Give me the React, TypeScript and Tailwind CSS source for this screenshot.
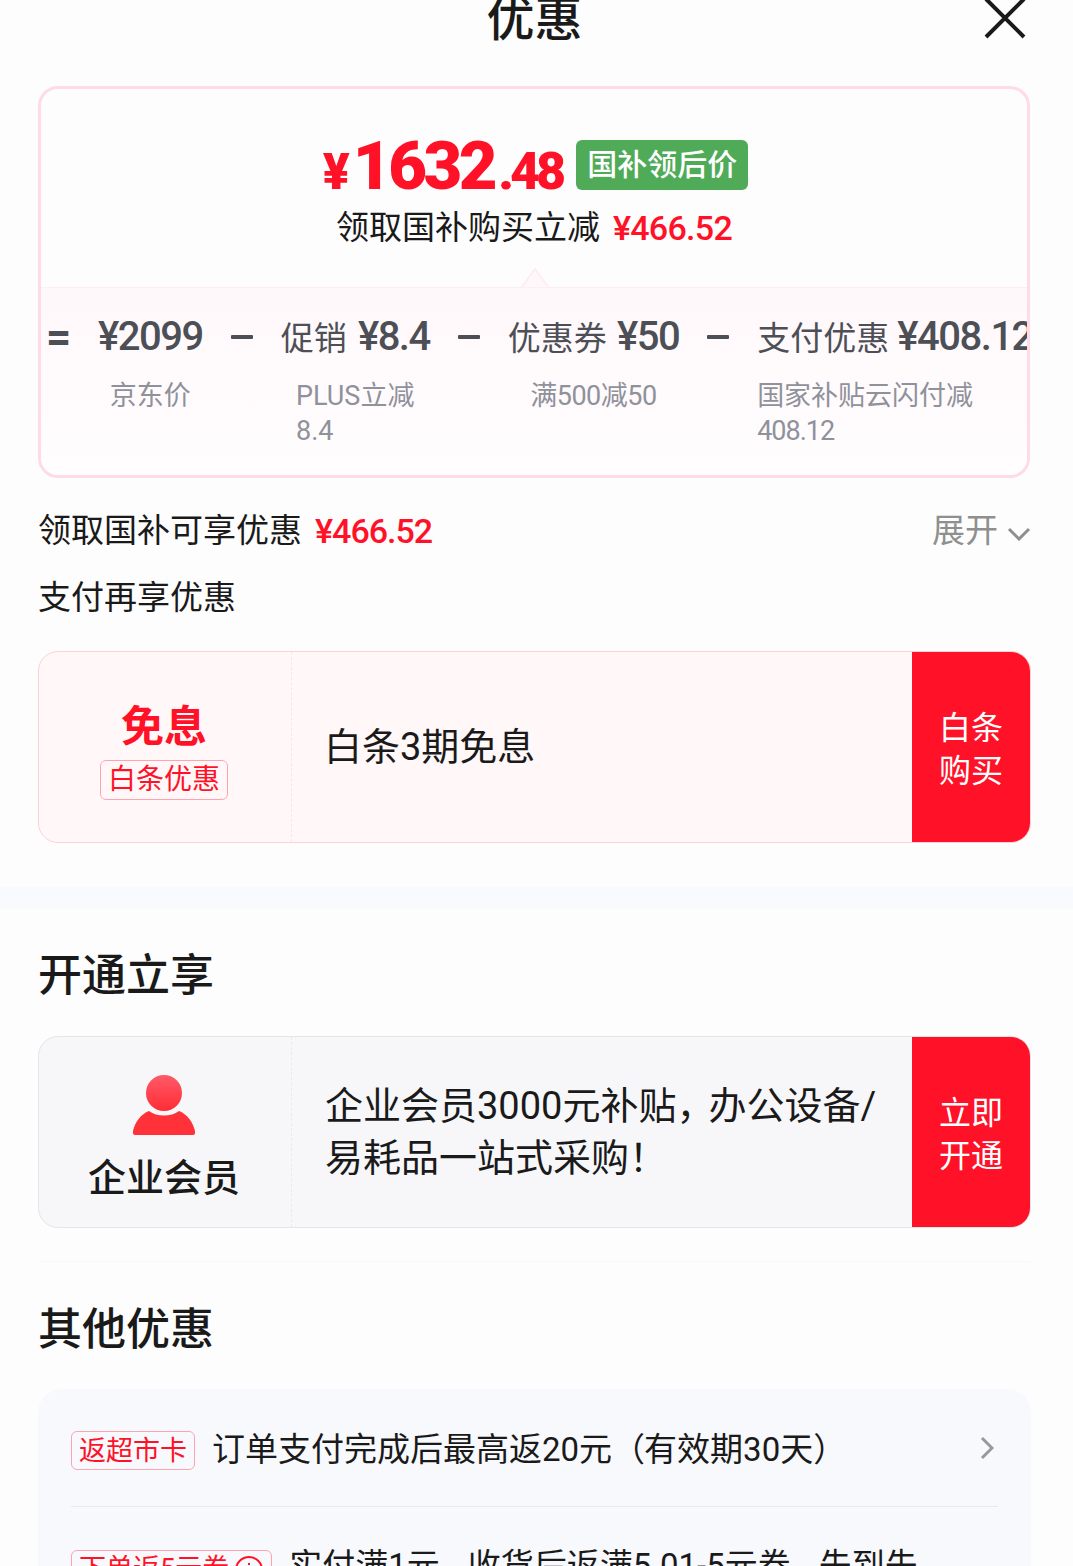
import React from "react";

const cjk = "font-['Roboto','Noto_Sans_CJK_SC',sans-serif]";

// numbers in the breakdown row are taller and narrower than the labels
const Amount = ({ children }: { children: string }) => (
  <span className="text-[40px] font-medium tracking-[-1.5px]">{children}</span>
);

const Part = ({ main, sub, center }: { main: React.ReactNode; sub: React.ReactNode; center?: boolean }) => (
  <div className={center ? "flex flex-col items-center shrink-0" : "flex flex-col shrink-0"}>
    <div className="text-[33px] leading-[44px] text-[#4d4f57] whitespace-nowrap">{main}</div>
    <div className="mt-[18px] text-[27px] leading-[35px] text-[#8f919b] whitespace-nowrap">{sub}</div>
  </div>
);

const Minus = () => (
  <div className="shrink-0 w-[22px] h-[4px] mt-[20px] rounded-[1px] bg-[#4d4f57]" />
);

const Action = ({ top, bottom }: { top: string; bottom: string }) => (
  <div className="w-[118px] shrink-0 bg-[#ff1228] flex flex-col items-center justify-center pt-[6px] text-[32px] leading-[43px] text-white">
    <div>{top}</div>
    <div>{bottom}</div>
  </div>
);

const Comma = ({ w }: { w: string }) => <span className={w}>，</span>;

export default function App() {
  return (
    <div className={`${cjk} w-[1073px] h-[1566px] overflow-hidden bg-[#fdfdfd] text-[#1a1a1a]`}>
      {/* header */}
      <div className="h-[100px] -mt-[14px] pr-[4px] grid grid-cols-[1fr_auto_1fr]">
        <div />
        <div className="text-[48px] leading-[68px] font-medium">优惠</div>
        <div className="flex justify-end pr-[42px] pt-[10px]">
          <svg width="44" height="44" viewBox="0 0 44 44" fill="none" stroke="#1a1a1a" strokeWidth="4">
            <path d="M3 3l38 38M41 3L3 41" />
          </svg>
        </div>
      </div>

      <div className="ml-[38px] w-[992px] h-[392px] border-[3px] border-[#ffdbe6] rounded-[20px] overflow-hidden flex flex-col">
        <div className="relative h-[199px] shrink-0 flex flex-col items-center border-b border-[#fdeef2]">
          <div className="mt-[51px] flex items-start h-[53px] ml-[3px]">
            <div className="mt-[1px] text-[#ff1228] font-black flex items-baseline leading-[50px]">
              <span className="text-[50px]">¥</span>
              <span className="text-[67px] ml-[3px] tracking-[-3.5px]">1632</span>
              <span className="text-[52px] ml-[4px] tracking-[-4px]">.48</span>
            </div>
            <div className="ml-[14px] h-[50px] w-[172px] bg-[#4fab58] rounded-[6px] text-white font-medium text-[30px] leading-[50px] text-center">
              国补领后价
            </div>
          </div>
          <div className="mt-[13px] flex items-center text-[33px] leading-[44px]">
            <span>领取国补购买立减</span>
            <span className="ml-[13px] text-[#ff1228] font-medium text-[34px] tracking-[-0.7px]">¥466.52</span>
          </div>
          <svg width="30" height="20" viewBox="0 0 30 20" className="absolute bottom-[-1px] left-[479px]">
            <path d="M1 20L15 1l14 19z" fill="#fff8fa" stroke="#fdeef2" strokeWidth="2" />
          </svg>
        </div>

        <div className="flex-1 bg-gradient-to-b from-[#fff8fa] to-[#fffdfe] pl-[5px] pt-[27px] flex gap-[28px]">
          <div className="shrink-0 text-[44px] leading-[44px] font-bold text-[#4d4f57] w-[24px]">=</div>
          <Part main={<Amount>¥2099</Amount>} sub="京东价" center />
          <Minus />
          <Part main={<>促销 <span className="ml-[3px]"><Amount>¥8.4</Amount></span></>} center sub={<>PLUS立减<br />8.4</>} />
          <Minus />
          <Part main={<>优惠券 <span className="ml-[2px]"><Amount>¥50</Amount></span></>} sub={<span className="tracking-[-0.5px]">满500减50</span>} center />
          <Minus />
          <Part
            main={<>支付优惠 <Amount>¥408.12</Amount></>}
            sub={<>国家补贴云闪付减<br /><span className="tracking-[-1px]">408.12</span></>}
          />
        </div>
      </div>

      <div className="ml-[38px] w-[993px] mt-[31px] h-[44px] flex items-center justify-between text-[33px]">
        <div className="flex items-center">
          <span>领取国补可享优惠</span>
          <span className="ml-[13px] text-[#ff1228] font-medium text-[34px] tracking-[-1px]">¥466.52</span>
        </div>
        <div className="flex items-center text-[#8f8f8f]">
          <span>展开</span>
          <svg width="24" height="14" viewBox="0 0 24 14" className="ml-[9px] mt-[6px]" fill="none" stroke="#8f8f8f" strokeWidth="3">
            <path d="M2 2l10 10L22 2" />
          </svg>
        </div>
      </div>
      <div className="ml-[38px] mt-[23px] h-[44px] text-[33px] leading-[44px]">支付再享优惠</div>

      {/* coupon */}
      <div className="ml-[38px] w-[993px] mt-[31px] h-[192px] flex border border-[#ffd0da] bg-[#fff7f8] rounded-[20px] overflow-hidden">
        <div className="w-[253px] shrink-0 border-r border-dashed border-[#fbe3e8] flex flex-col items-center pt-[46px] pr-[2px]">
          <div className="text-[43px] leading-[58px] font-bold text-[#ff1228]">免息</div>
          <div className="mt-[4px] w-[128px] h-[40px] border border-[#ffa3b1] rounded-[6px] text-[28px] leading-[38px] text-center text-[#ff1228]">
            白条优惠
          </div>
        </div>
        <div className="flex-1 pl-[32px] flex items-center text-[38px] leading-[52px]">白条3期免息</div>
        <Action top="白条" bottom="购买" />
      </div>

      <div className="mt-[44px] h-[22px] bg-[#f9fafd]" />

      <div className="ml-[38px] mt-[37px] text-[44px] leading-[60px] font-medium">开通立享</div>

      <div className="ml-[38px] w-[993px] mt-[30px] h-[192px] flex border border-[#e5e5e8] bg-[#f7f7fa] rounded-[20px] overflow-hidden">
        <div className="w-[253px] shrink-0 border-r border-dashed border-[#ebebee] flex flex-col items-center pt-[38px] pr-[2px]">
          <svg width="64" height="61" viewBox="0 0 64 61" className="-ml-[1px]">
            <defs>
              <linearGradient id="user" x1="0" y1="0" x2="0" y2="1">
                <stop offset="0" stopColor="#ff5a68" />
                <stop offset="1" stopColor="#ff2d35" />
              </linearGradient>
            </defs>
            <circle cx="32" cy="18" r="18" fill="url(#user)" />
            <path
              d="M17 36c8 6 22 6 30 0 8 3 14 11 16 20 .4 3-.6 4-2 4H3c-1.400 0-2.400-1-2-4 2-9 8-17 16-20z"
              fill="#ff3239"
            />
          </svg>
          <div className="mt-[16px] text-[38px] leading-[52px] font-medium">企业会员</div>
        </div>
        <div className="flex-1 pl-[33px] pt-[43px] text-[38px] leading-[52px]">
          企业会员3000元补贴<Comma w="tracking-[-6px]" />办公设备/
          <br />
          易耗品一站式采购！
        </div>
        <Action top="立即" bottom="开通" />
      </div>

      <div className="ml-[38px] w-[993px] mt-[33px] h-px bg-[#f8f8f8]" />

      <div className="ml-[38px] mt-[38px] text-[44px] leading-[60px] font-medium">其他优惠</div>

      <div className="ml-[38px] w-[993px] mt-[29px] h-[400px] bg-[#f8f9fd] rounded-[24px] px-[33px]">
        <div className="h-[118px] pt-[5px] flex items-center border-b border-[#e8e9ee]">
          <div className="h-[39px] px-[7px] border border-[#ffa3b1] rounded-[6px] text-[27px] leading-[39px] text-[#ff1228] whitespace-nowrap">
            返超市卡
          </div>
          <div className="ml-[17px] flex-1 text-[33px] leading-[44px] whitespace-nowrap">
            订单支付完成后最高返20元<span className="tracking-[-1px]">（</span>有效期30天）
          </div>
          <svg width="14" height="24" viewBox="0 0 14 24" fill="none" stroke="#999" strokeWidth="3" className="mr-[4px] -mt-[5px]">
            <path d="M2 2l10 10L2 22" />
          </svg>
        </div>
        <div className="flex items-start pt-[43px]">
          <div className="h-[39px] px-[7px] border border-[#ffa3b1] rounded-[6px] text-[27px] leading-[39px] text-[#ff1228] whitespace-nowrap flex items-center">
            下单返5元券
            <svg width="30" height="30" viewBox="0 0 30 30" fill="none" stroke="#ff1228" strokeWidth="2" className="ml-[5px]">
              <circle cx="15" cy="15" r="13" />
              <path d="M15 13v9M15 8v2" />
            </svg>
          </div>
          <div className="ml-[17px] text-[33px] leading-[44px] -mt-[6px] whitespace-nowrap">
            实付满1元<Comma w="tracking-[-5px]" />收货后返满5.01-5元券<Comma w="tracking-[-5px]" />先到先
          </div>
        </div>
      </div>
    </div>
  );
}
